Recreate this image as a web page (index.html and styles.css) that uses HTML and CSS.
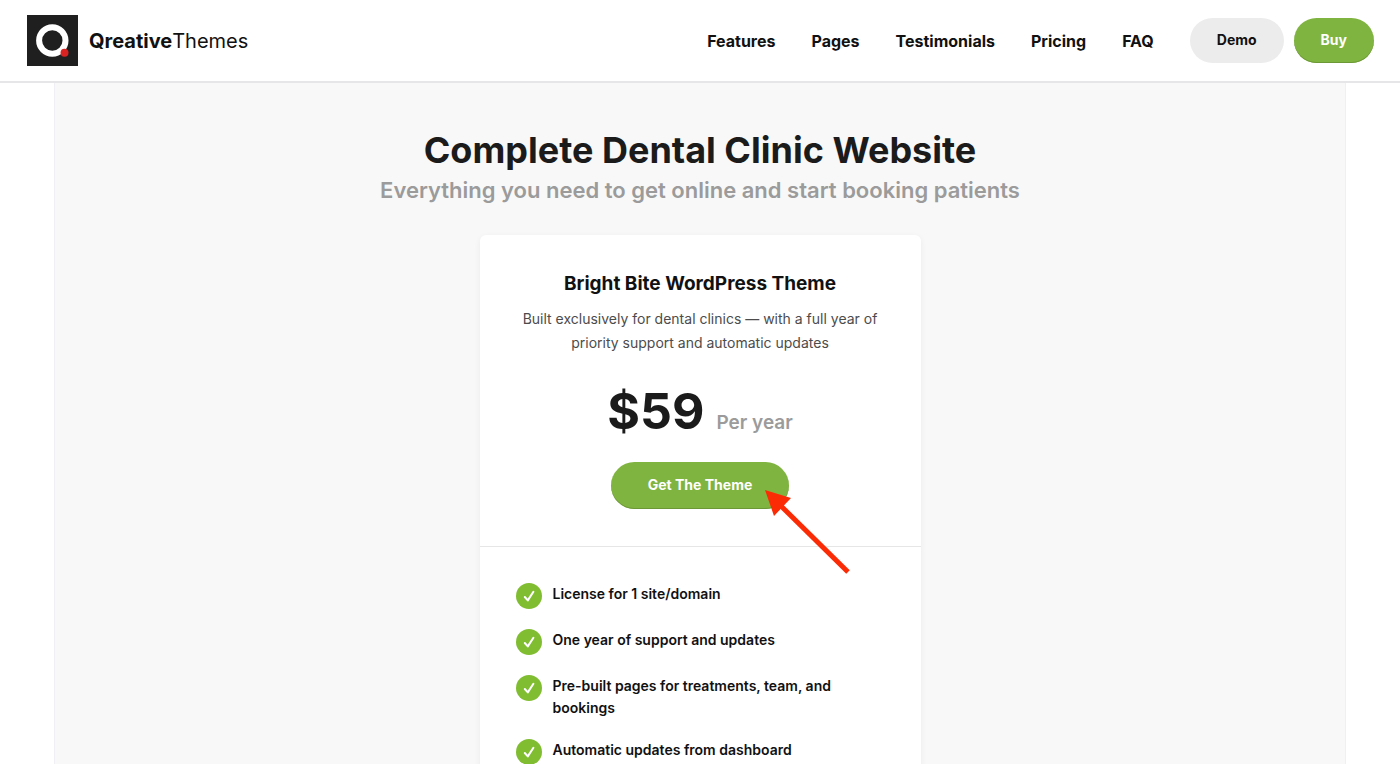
FILE: index.html
```html
<!DOCTYPE html>
<html lang="en">
<head>
    <meta charset="UTF-8">
    <meta name="viewport" content="width=device-width, initial-scale=1.0">
    <title>Bright Bite WordPress Theme</title>
    <link rel="stylesheet" href="styles.css">
</head>
<body>
    <!-- Header -->
    <header class="header">
        <a href="#" class="logo">
            <svg class="logo-mark" viewBox="0 0 51 51" aria-hidden="true">
                <rect width="51" height="51" fill="#1f1f1f"/>
                <circle cx="25.3" cy="25.5" r="13.2" fill="none" stroke="#fff" stroke-width="6"/>
                <circle cx="37.5" cy="37.8" r="4" fill="#d92323"/>
            </svg>
            <span class="logo-text"><strong>Qreative</strong>Themes</span>
        </a>
        <nav class="nav">
            <a href="#features">Features</a>
            <a href="#pages">Pages</a>
            <a href="#testimonials">Testimonials</a>
            <a href="#pricing">Pricing</a>
            <a href="#faq">FAQ</a>
        </nav>
        <div class="header-buttons">
            <button type="button" class="button button-light">Demo</button>
            <button type="button" class="button">Buy</button>
        </div>
    </header>

    <!-- Pricing -->
    <main class="pricing" id="pricing">
        <h1 class="pricing-title">Complete Dental Clinic Website</h1>
        <p class="pricing-subtitle">Everything you need to get online and start booking patients</p>

        <section class="card">
            <div class="card-top">
                <h2 class="card-title">Bright Bite WordPress Theme</h2>
                <p class="card-text">Built exclusively for dental clinics — with a full year of priority support and automatic updates</p>
                <div class="price">
                    <span class="price-value">$59</span>
                    <span class="price-period">Per year</span>
                </div>
                <div class="cta">
                    <button type="button" class="button button-large">Get The Theme</button>
                    <svg class="arrow" viewBox="0 0 86 86" aria-hidden="true">
                        <path d="M15 15L83 82" stroke="#fb2c05" stroke-width="5"/>
                        <path d="M0 0L26 8L9 26Z" fill="#fb2c05"/>
                    </svg>
                </div>
            </div>
            <ul class="features">
                <li>
                    <svg class="check" viewBox="0 0 26 26" aria-hidden="true"><circle cx="13" cy="13" r="13"/><path d="M8.8 14L11.8 17.4L17.4 8.8"/></svg>
                    <span>License for 1 site/domain</span>
                </li>
                <li>
                    <svg class="check" viewBox="0 0 26 26" aria-hidden="true"><circle cx="13" cy="13" r="13"/><path d="M8.8 14L11.8 17.4L17.4 8.8"/></svg>
                    <span>One year of support and updates</span>
                </li>
                <li>
                    <svg class="check" viewBox="0 0 26 26" aria-hidden="true"><circle cx="13" cy="13" r="13"/><path d="M8.8 14L11.8 17.4L17.4 8.8"/></svg>
                    <span>Pre-built pages for treatments, team, and bookings</span>
                </li>
                <li>
                    <svg class="check" viewBox="0 0 26 26" aria-hidden="true"><circle cx="13" cy="13" r="13"/><path d="M8.8 14L11.8 17.4L17.4 8.8"/></svg>
                    <span>Automatic updates from dashboard</span>
                </li>
            </ul>
        </section>
    </main>
</body>
</html>
```

FILE: styles.css
```css
* {
    box-sizing: border-box;
}

html {
    scrollbar-width: none;
}

body {
    margin: 0;
    font-family: Inter, Arial, sans-serif;
    color: #111;
    background-color: white;
}

h1, h2, p, ul {
    margin: 0;
    padding: 0;
}

/* Header */
.header {
    display: flex;
    align-items: center;
    padding: 15px 26px 15px 27px;
    border-bottom: 2px solid #e6e6e8;
    background-color: white;
}

.logo {
    display: flex;
    align-items: center;
    gap: 11px;
    margin-right: auto;
    color: #111;
    text-decoration: none;
}

.logo-mark {
    width: 51px;
    height: 51px;
}

.logo-text {
    font-size: 20px;
}

.logo-text strong {
    font-weight: 700;
}

.nav {
    display: flex;
    gap: 36px;
    margin-right: 36px;
}

.nav a {
    color: #111;
    font-size: 16px;
    font-weight: 700;
    text-decoration: none;
}

.header-buttons {
    display: flex;
    gap: 10px;
}

.button {
    padding: 13px 27px 14px;
    border: none;
    border-radius: 24px;
    background-color: #80b440;
    box-shadow: inset 0 -1px 0 #6c9836;
    color: white;
    font-family: inherit;
    font-size: 14px;
    font-weight: 700;
    line-height: 18px;
    cursor: pointer;
}

.button-light {
    background-color: #ececec;
    box-shadow: none;
    color: #111;
}

.button-large {
    padding: 14px 37px 15px;
}

/* Pricing */
.pricing {
    margin: 0 54px;
    padding: 44px 20px 0;
    border: 1px solid #f0f0f4;
    border-width: 0 1px;
    background-color: #f8f8f8;
    text-align: center;
}

.pricing-title {
    color: #1b1b1b;
    font-size: 36px;
    font-weight: 700;
    line-height: 47px;
}

.pricing-subtitle {
    margin-bottom: 29px;
    color: #9b9b9b;
    font-size: 22px;
    font-weight: 600;
    line-height: 32px;
}

.card {
    max-width: 441px;
    margin: 0 auto;
    border-radius: 6px;
    background-color: white;
    box-shadow: 0 2px 6px rgba(0, 0, 0, 0.06);
}

.card-top {
    padding: 36px 36px 37px;
    border-bottom: 1px solid #e6e6e6;
}

.card-title {
    margin-bottom: 10px;
    font-size: 19px;
    font-weight: 700;
    line-height: 26px;
}

.card-text {
    margin-bottom: 26px;
    color: #4c4c4c;
    font-size: 14px;
    line-height: 24px;
}

.price {
    display: flex;
    justify-content: center;
    align-items: baseline;
    gap: 12px;
    margin-bottom: 21px;
}

.price-value {
    color: #1b1b1b;
    font-size: 50px;
    font-weight: 700;
    line-height: 60px;
}

.price-period {
    color: #9b9b9b;
    font-size: 19px;
    font-weight: 600;
}

.cta {
    display: inline-block;
    position: relative;
    vertical-align: top;
}

/* Pointer drawn over the button */
.arrow {
    position: absolute;
    top: 28px;
    right: -62px;
    width: 86px;
    height: 86px;
    pointer-events: none;
}

.features {
    display: flex;
    flex-direction: column;
    gap: 20px;
    padding: 36px;
    list-style: none;
    text-align: left;
}

.features li {
    display: flex;
    align-items: flex-start;
    gap: 11px;
    font-size: 14px;
    font-weight: 600;
    line-height: 22px;
}

.check {
    flex: none;
    width: 26px;
    height: 26px;
}

.check circle {
    fill: #80bd31;
}

.check path {
    fill: none;
    stroke: white;
    stroke-width: 2;
    stroke-linecap: round;
    stroke-linejoin: round;
}
```
